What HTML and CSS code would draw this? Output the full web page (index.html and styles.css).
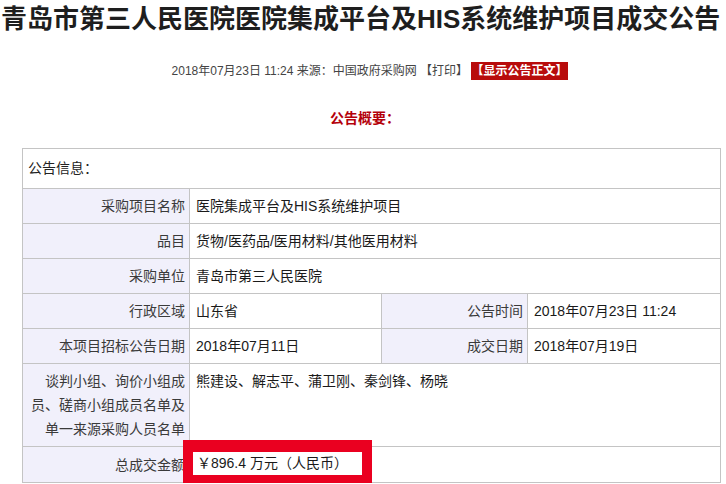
FILE: index.html
```
<!DOCTYPE html>
<html lang="zh-CN">
<head>
<meta charset="utf-8">
<title>青岛市第三人民医院医院集成平台及HIS系统维护项目成交公告</title>
<link rel="stylesheet" href="styles.css">
</head>
<body>
<h1 class="title">青岛市第三人民医院医院集成平台及HIS系统维护项目成交公告</h1>
<div class="meta">2018年07月23日 11:24 来源：中国政府采购网 【打印】 <span class="show-btn">【显示公告正文】</span></div>
<div class="summary">公告概要：</div>
<table class="info">
  <colgroup>
    <col class="c1"><col class="c2"><col class="c3"><col class="c4">
  </colgroup>
  <tr><td class="head" colspan="4">公告信息：</td></tr>
  <tr><td class="lbl">采购项目名称</td><td class="val" colspan="3">医院集成平台及HIS系统维护项目</td></tr>
  <tr><td class="lbl">品目</td><td class="val" colspan="3">货物/医药品/医用材料/其他医用材料</td></tr>
  <tr><td class="lbl">采购单位</td><td class="val" colspan="3">青岛市第三人民医院</td></tr>
  <tr><td class="lbl">行政区域</td><td class="val">山东省</td><td class="lbl">公告时间</td><td class="val">2018年07月23日 11:24</td></tr>
  <tr><td class="lbl">本项目招标公告日期</td><td class="val">2018年07月11日</td><td class="lbl">成交日期</td><td class="val">2018年07月19日</td></tr>
  <tr><td class="lbl">谈判小组、询价小组成员、磋商小组成员名单及单一来源采购人员名单</td><td class="val top" colspan="3">熊建设、解志平、蒲卫刚、秦剑锋、杨晓</td></tr>
  <tr><td class="lbl">总成交金额</td><td class="val amount" colspan="3"><div class="mark">￥896.4 万元（人民币）</div></td></tr>
</table>
</body>
</html>
```
FILE: styles.css
```
html, body {
  margin: 0;
  padding: 0;
  background: #fff;
}
body {
  font-family: "Liberation Sans", "Noto Sans CJK SC", sans-serif;
  color: #333;
}
.title {
  margin: 0;
  padding-left: 1px;
  font-size: 26px;
  line-height: 38px;
  font-weight: bold;
  color: #1e1e1e;
  white-space: nowrap;
}
.meta {
  margin-top: 24px;
  font-size: 12px;
  line-height: 18px;
  color: #444;
  text-align: center;
  padding-left: 14px;
}
.show-btn {
  display: inline-block;
  background: #b80c0c;
  color: #fff;
  font-weight: bold;
  padding: 0 1px 0 0;
}
.summary {
  margin-top: 29px;
  font-size: 14px;
  line-height: 18px;
  font-weight: bold;
  color: #b4000a;
  text-align: center;
  padding-left: 4px;
}
.info {
  margin: 21px 0 0 22px;
  width: 699px;
  border-collapse: collapse;
  table-layout: fixed;
  font-size: 14px;
}
.c1 { width: 167px; }
.c2 { width: 192px; }
.c3 { width: 146px; }
.c4 { width: 193px; }
.info td {
  border: 1px solid #c4c4c4;
  line-height: 24px;
  padding: 5px 6px;
}
.info td.head {
  padding: 7px 5px 8px;
  color: #222;
  background: #fff;
}
.info td.lbl {
  background: #f1f0fb;
  text-align: right;
  color: #3a3a3a;
  padding: 5px 4px 5px 8px;
  vertical-align: middle;
}
.info td.val {
  color: #1a1a1a;
  background: #fff;
}
.info td.top {
  vertical-align: top;
}
.info td.amount {
  position: relative;
  height: 25px;
}
.mark {
  position: absolute;
  left: -7px;
  top: -7px;
  width: 165px;
  height: 23px;
  line-height: 23px;
  padding-left: 4px;
  border: 10px solid #ea0020;
  border-top-width: 12px;
  background: #fff;
  color: #1a1a1a;
  white-space: nowrap;
}
```
